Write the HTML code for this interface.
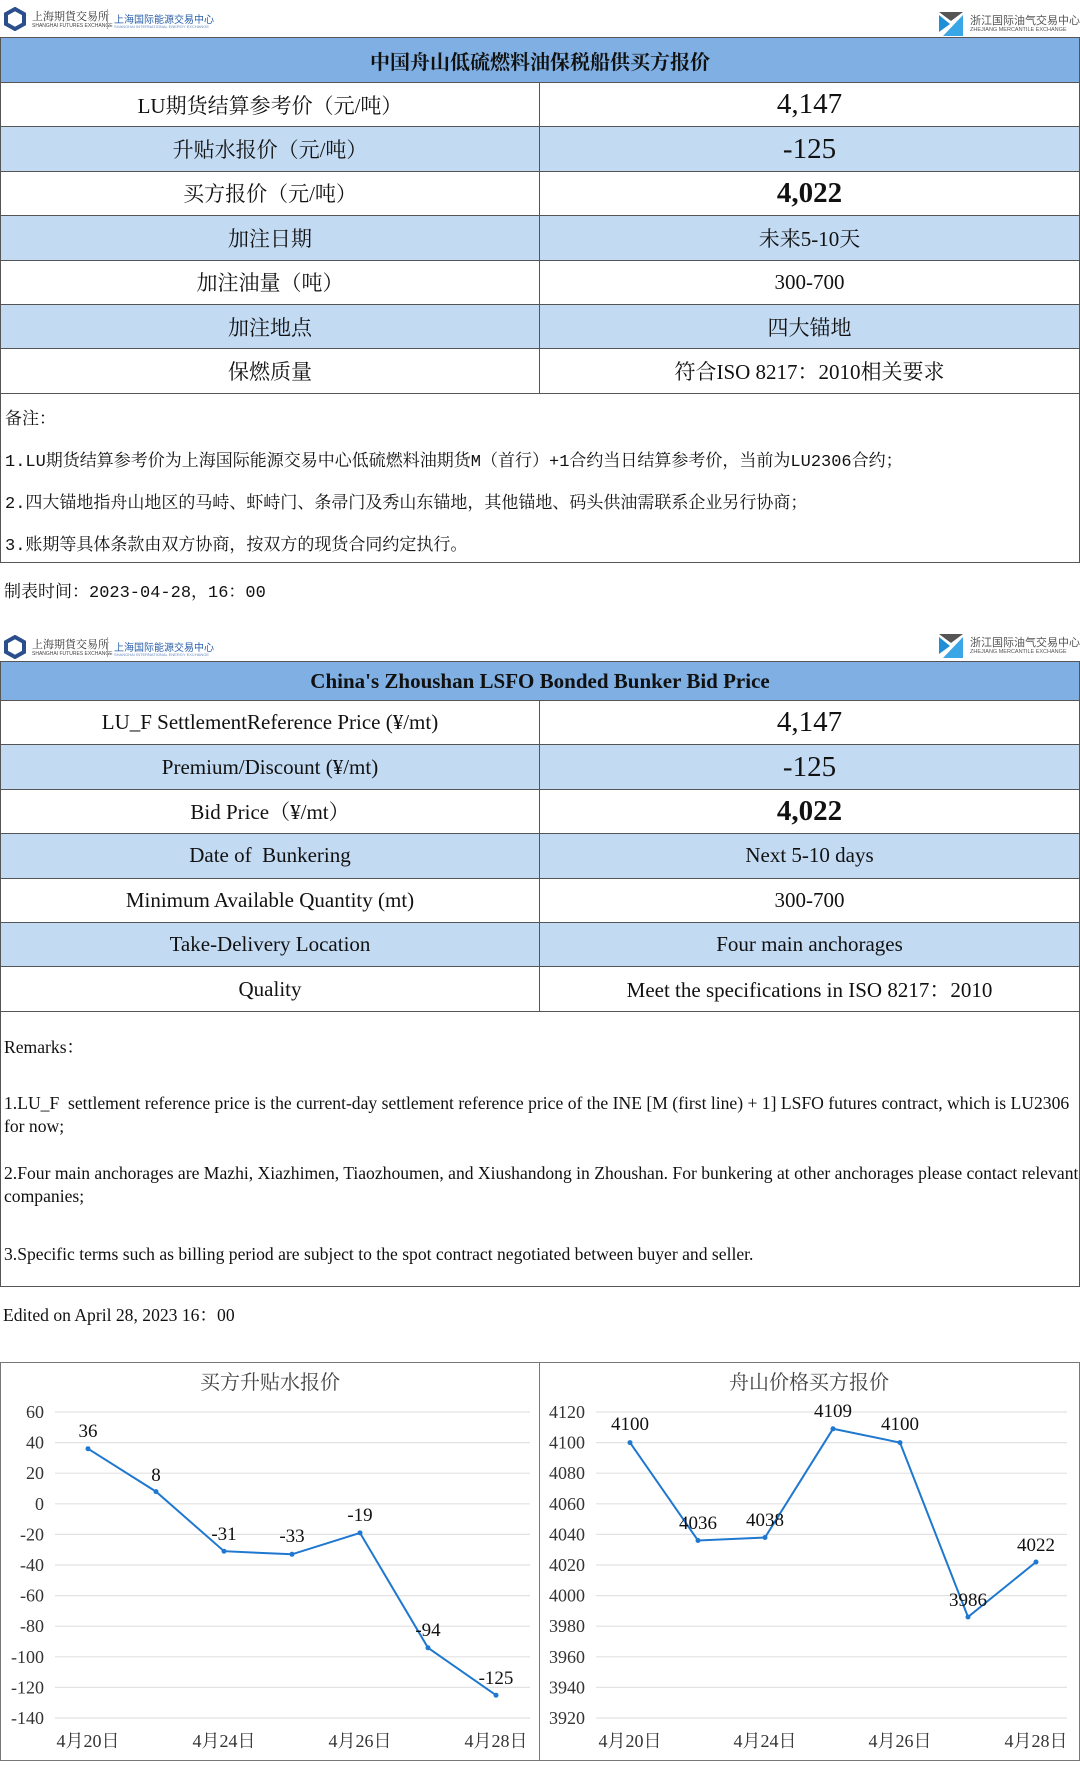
<!DOCTYPE html>
<html><head><meta charset="utf-8"><style>
*{margin:0;padding:0;box-sizing:border-box}
body{width:1080px;height:1772px;background:#fff;position:relative;overflow:hidden;font-family:"Liberation Serif","Noto Serif CJK SC",serif;color:#111}
.a{position:absolute}
.tbl{position:absolute;left:0;width:1080px;border:1px solid #555}
.row{display:flex;height:44.4px;border-top:1px solid #555}
.row div{display:flex;align-items:center;justify-content:center;font-size:21px}
.row .l{width:539px;border-right:1px solid #555}
.row .r{flex:1}
.b{background:#c3daf3}
.ttl{height:44px;background:#7fafe3;display:flex;align-items:center;justify-content:center;font-size:21px;font-weight:bold}
.num{font-size:29px!important}
.logo{position:absolute;font-family:"Liberation Sans","Noto Sans CJK SC",sans-serif}
.cn{font-family:"Liberation Mono","Noto Serif CJK SC",serif;font-size:17px}
</style></head><body>

<div class="logo" style="left:3px;top:7px">
<svg width="24" height="24" viewBox="0 0 24 24"><polygon points="12,2 21,7 21,17 12,22 3,17 3,7" fill="none" stroke="#2a4f8c" stroke-width="4"/></svg></div>
<div class="logo" style="left:32px;top:8px;font-size:11px;color:#333;font-family:'Noto Serif CJK SC',serif">上海期貨交易所</div>
<div class="logo" style="left:32px;top:23px;font-size:5px;color:#444">SHANGHAI FUTURES EXCHANGE</div>
<div class="a" style="left:107px;top:9px;width:1px;height:20px;background:#aaa"></div>
<div class="logo" style="left:114px;top:11px;font-size:10px;color:#2a5fa8">上海国际能源交易中心</div>
<div class="logo" style="left:114px;top:24px;font-size:4px;color:#6a8ac0">SHANGHAI INTERNATIONAL ENERGY EXCHANGE</div>
<div class="logo" style="left:939px;top:12px"><svg width="24" height="24" viewBox="0 0 24 24"><polygon points="0,0 24,0 12,9" fill="#555"/><polygon points="0,3 11,12 0,20" fill="#1e8fd6"/><polygon points="24,3 24,24 4,24" fill="#3aa6e6"/></svg></div>
<div class="logo" style="left:970px;top:12px;font-size:11px;color:#555">浙江国际油气交易中心</div>
<div class="logo" style="left:970px;top:27px;font-size:5.5px;color:#555">ZHEJIANG MERCANTILE EXCHANGE</div>

<div class="tbl" style="top:37px">
<div class="ttl" style="font-family:'Noto Serif CJK SC',serif;font-size:20px">中国舟山低硫燃料油保税船供买方报价</div>
<div class="row"><div class="l">LU期货结算参考价（元/吨）</div><div class="r num">4,147</div></div>
<div class="row b"><div class="l">升贴水报价（元/吨）</div><div class="r num">-125</div></div>
<div class="row"><div class="l">买方报价（元/吨）</div><div class="r num" style="font-weight:bold">4,022</div></div>
<div class="row b"><div class="l">加注日期</div><div class="r">未来5-10天</div></div>
<div class="row"><div class="l">加注油量（吨）</div><div class="r">300-700</div></div>
<div class="row b"><div class="l">加注地点</div><div class="r">四大锚地</div></div>
<div class="row"><div class="l">保燃质量</div><div class="r">符合ISO 8217：2010相关要求</div></div>
</div>
<div class="a cn" style="left:0;top:392px;width:1080px;height:171px;border:1px solid #555;border-top:none">
<div class="a" style="left:4px;top:12px">备注：</div>
<div class="a" style="left:4px;top:54px;white-space:nowrap">1.LU期货结算参考价为上海国际能源交易中心低硫燃料油期货M（首行）+1合约当日结算参考价，当前为LU2306合约；</div>
<div class="a" style="left:4px;top:96px;white-space:nowrap">2.四大锚地指舟山地区的马峙、虾峙门、条帚门及秀山东锚地，其他锚地、码头供油需联系企业另行协商；</div>
<div class="a" style="left:4px;top:138px;white-space:nowrap">3.账期等具体条款由双方协商，按双方的现货合同约定执行。</div>
</div>
<div class="a cn" style="left:4px;top:577px">制表时间：2023-04-28，16：00</div>

<div class="logo" style="left:3px;top:635px"><svg width="24" height="24" viewBox="0 0 24 24"><polygon points="12,2 21,7 21,17 12,22 3,17 3,7" fill="none" stroke="#2a4f8c" stroke-width="4"/></svg></div>
<div class="logo" style="left:32px;top:636px;font-size:11px;color:#333;font-family:'Noto Serif CJK SC',serif">上海期貨交易所</div>
<div class="logo" style="left:32px;top:651px;font-size:5px;color:#444">SHANGHAI FUTURES EXCHANGE</div>
<div class="a" style="left:107px;top:637px;width:1px;height:20px;background:#aaa"></div>
<div class="logo" style="left:114px;top:639px;font-size:10px;color:#2a5fa8">上海国际能源交易中心</div>
<div class="logo" style="left:114px;top:652px;font-size:4px;color:#6a8ac0">SHANGHAI INTERNATIONAL ENERGY EXCHANGE</div>
<div class="logo" style="left:939px;top:634px"><svg width="24" height="24" viewBox="0 0 24 24"><polygon points="0,0 24,0 12,9" fill="#555"/><polygon points="0,3 11,12 0,20" fill="#1e8fd6"/><polygon points="24,3 24,24 4,24" fill="#3aa6e6"/></svg></div>
<div class="logo" style="left:970px;top:634px;font-size:11px;color:#555">浙江国际油气交易中心</div>
<div class="logo" style="left:970px;top:649px;font-size:5.5px;color:#555">ZHEJIANG MERCANTILE EXCHANGE</div>

<div class="tbl" style="top:661px">
<div class="ttl" style="height:38px">China's Zhoushan LSFO Bonded Bunker Bid Price</div>
<div class="row"><div class="l">LU_F SettlementReference Price (¥/mt)</div><div class="r num">4,147</div></div>
<div class="row b"><div class="l">Premium/Discount (¥/mt)</div><div class="r num">-125</div></div>
<div class="row"><div class="l">Bid Price（¥/mt）</div><div class="r num" style="font-weight:bold">4,022</div></div>
<div class="row b"><div class="l">Date of&nbsp; Bunkering</div><div class="r">Next 5-10 days</div></div>
<div class="row"><div class="l">Minimum Available Quantity (mt)</div><div class="r">300-700</div></div>
<div class="row b"><div class="l">Take-Delivery Location</div><div class="r">Four main anchorages</div></div>
<div class="row"><div class="l">Quality</div><div class="r">Meet the specifications in ISO 8217：2010</div></div>
</div>
<div class="a" style="left:0;top:1010px;width:1080px;height:277px;border:1px solid #555;border-top:none;font-size:17.6px;line-height:23px">
<div class="a" style="left:3px;top:26px">Remarks：</div>
<div class="a" style="left:3px;top:82px;width:1078px">1.LU_F&nbsp; settlement reference price is the current-day settlement reference price of the INE [M (first line) + 1] LSFO futures contract, which is LU2306 for now;</div>
<div class="a" style="left:3px;top:152px;width:1078px">2.Four main anchorages are Mazhi, Xiazhimen, Tiaozhoumen, and Xiushandong in Zhoushan. For bunkering at other anchorages please contact relevant companies;</div>
<div class="a" style="left:3px;top:233px">3.Specific terms such as billing period are subject to the spot contract negotiated between buyer and seller.</div>
</div>
<div class="a" style="left:3px;top:1302px;font-size:17.6px">Edited on April 28, 2023 16：00</div>

<svg class="a" style="left:0;top:1350px" width="1080" height="422" viewBox="0 0 1080 422" font-family="Liberation Serif, Noto Serif CJK SC, serif">
<rect x="0.5" y="12.5" width="1079" height="398" fill="#fff" stroke="#777"/>
<line x1="539.5" y1="12" x2="539.5" y2="411" stroke="#777"/>
<g stroke="#e2e2e2" stroke-width="1.2">
<line x1="55" x2="530" y1="62" y2="62"/><line x1="55" x2="530" y1="92.6" y2="92.6"/><line x1="55" x2="530" y1="123.2" y2="123.2"/><line x1="55" x2="530" y1="153.8" y2="153.8"/><line x1="55" x2="530" y1="184.4" y2="184.4"/><line x1="55" x2="530" y1="215" y2="215"/><line x1="55" x2="530" y1="245.6" y2="245.6"/><line x1="55" x2="530" y1="276.2" y2="276.2"/><line x1="55" x2="530" y1="306.8" y2="306.8"/><line x1="55" x2="530" y1="337.4" y2="337.4"/><line x1="55" x2="530" y1="368" y2="368"/>
<line x1="596" x2="1067" y1="62" y2="62"/><line x1="596" x2="1067" y1="92.6" y2="92.6"/><line x1="596" x2="1067" y1="123.2" y2="123.2"/><line x1="596" x2="1067" y1="153.8" y2="153.8"/><line x1="596" x2="1067" y1="184.4" y2="184.4"/><line x1="596" x2="1067" y1="215" y2="215"/><line x1="596" x2="1067" y1="245.6" y2="245.6"/><line x1="596" x2="1067" y1="276.2" y2="276.2"/><line x1="596" x2="1067" y1="306.8" y2="306.8"/><line x1="596" x2="1067" y1="337.4" y2="337.4"/><line x1="596" x2="1067" y1="368" y2="368"/>
</g>
<g font-size="18" fill="#333" text-anchor="end">
<text x="44" y="68">60</text><text x="44" y="98.6">40</text><text x="44" y="129.2">20</text><text x="44" y="159.8">0</text><text x="44" y="190.4">-20</text><text x="44" y="221">-40</text><text x="44" y="251.6">-60</text><text x="44" y="282.2">-80</text><text x="44" y="312.8">-100</text><text x="44" y="343.4">-120</text><text x="44" y="374">-140</text>
<text x="585" y="68">4120</text><text x="585" y="98.6">4100</text><text x="585" y="129.2">4080</text><text x="585" y="159.8">4060</text><text x="585" y="190.4">4040</text><text x="585" y="221">4020</text><text x="585" y="251.6">4000</text><text x="585" y="282.2">3980</text><text x="585" y="312.8">3960</text><text x="585" y="343.4">3940</text><text x="585" y="374">3920</text>
</g>
<g font-size="18" fill="#333" text-anchor="middle">
<text x="88" y="397">4月20日</text><text x="224" y="397">4月24日</text><text x="360" y="397">4月26日</text><text x="496" y="397">4月28日</text>
<text x="630" y="397">4月20日</text><text x="765" y="397">4月24日</text><text x="900" y="397">4月26日</text><text x="1036" y="397">4月28日</text>
</g>
<text x="270" y="39" font-size="20" fill="#444" text-anchor="middle">买方升贴水报价</text>
<text x="809" y="39" font-size="20" fill="#444" text-anchor="middle">舟山价格买方报价</text>
<polyline fill="none" stroke="#1f78cf" stroke-width="2" points="88,98.7 156,141.6 224,201.2 292,204.3 360,182.9 428,297.8 496,345.2"/>
<polyline fill="none" stroke="#1f78cf" stroke-width="2" points="630,92.6 698,190.5 765,187.5 833,78.8 900,92.6 968,267 1036,212"/>
<g fill="#1f78cf">
<circle cx="88" cy="98.7" r="2.5"/><circle cx="156" cy="141.6" r="2.5"/><circle cx="224" cy="201.2" r="2.5"/><circle cx="292" cy="204.3" r="2.5"/><circle cx="360" cy="182.9" r="2.5"/><circle cx="428" cy="297.8" r="2.5"/><circle cx="496" cy="345.2" r="2.5"/>
<circle cx="630" cy="92.6" r="2.5"/><circle cx="698" cy="190.5" r="2.5"/><circle cx="765" cy="187.5" r="2.5"/><circle cx="833" cy="78.8" r="2.5"/><circle cx="900" cy="92.6" r="2.5"/><circle cx="968" cy="267" r="2.5"/><circle cx="1036" cy="212" r="2.5"/>
</g>
<g font-size="19" fill="#111" text-anchor="middle">
<text x="88" y="87">36</text><text x="156" y="131">8</text><text x="224" y="190">-31</text><text x="292" y="192">-33</text><text x="360" y="171">-19</text><text x="428" y="286">-94</text><text x="496" y="334">-125</text>
<text x="630" y="80">4100</text><text x="698" y="179">4036</text><text x="765" y="176">4038</text><text x="833" y="67">4109</text><text x="900" y="80">4100</text><text x="968" y="256">3986</text><text x="1036" y="201">4022</text>
</g>
</svg>
</body></html>
